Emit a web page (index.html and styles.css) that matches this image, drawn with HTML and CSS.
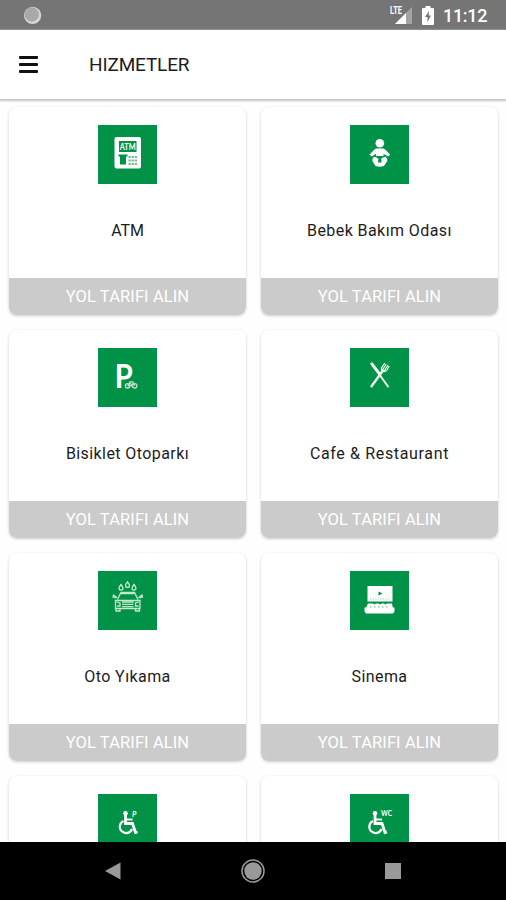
FILE: index.html
```
<!DOCTYPE html>
<html lang="tr">
<head>
    <meta charset="UTF-8">
    <meta name="viewport" content="width=device-width, initial-scale=1.0">
    <title>Hizmetler</title>
    <link rel="stylesheet" href="styles.css">
</head>
<body>
    <!-- Durum çubuğu -->
    <div class="status-bar">
        <svg class="status-dot" width="20" height="20" viewBox="0 0 20 20">
            <circle cx="10.600" cy="10.300" r="8.600" fill="#d6d6d6"/>
            <circle cx="9.800" cy="9.500" r="7.200" fill="#a9a9a9"/>
        </svg>
        <div class="status-icons">
            <svg width="24" height="20" viewBox="0 0 24 20">
                <path d="M22 2v17H5z" fill="#a3a3a3"/>
                <path d="M16 8v11H5z" fill="#fff"/>
                <path d="M0 1h12v9H0z" fill="#757575"/>
                <text x="0" y="9" class="lte" textLength="12" lengthAdjust="spacingAndGlyphs">LTE</text>
            </svg>
            <svg class="battery" width="12" height="19" viewBox="0 0 12 19">
                <path d="M3.500 0h5v2H11q1 0 1 1v15q0 1-1 1H1q-1 0-1-1V3q0-1 1-1h2.500z" fill="#fff"/>
                <path d="M7 5L3 11h2.500v5L9 9.500H6.700z" fill="#757575"/>
            </svg>
            <span class="clock">11:12</span>
        </div>
    </div>

    <!-- Başlık -->
    <header class="header">
        <button class="menu-btn" aria-label="Menü"><span></span><span></span><span></span></button>
        <h1>HIZMETLER</h1>
    </header>

    <!-- Hizmet kartları -->
    <main class="services">
        <div class="card">
            <svg class="card-icon" viewBox="0 0 59 59">
                <rect x="16.500" y="12" width="26.500" height="31.500" rx="2" fill="#fff"/>
                <rect x="21" y="16" width="17.500" height="11" fill="#009347"/>
                <text x="21.700" y="24.800" class="icon-text" font-size="9" textLength="16" lengthAdjust="spacingAndGlyphs">ATM</text>
                <path d="M20.500 29.500h9v2h-1.500v8h-6v-8h-1.500z" fill="#009347"/>
                <path d="M30.500 32h8.500M30.500 35.500h8.500M30.500 39h8.500" stroke="#75bf94" stroke-width="1.800" stroke-dasharray="2.400 .7"/>
            </svg>
            <p class="card-name name-atm">ATM</p>
            <button class="card-btn">YOL TARIFI ALIN</button>
        </div>
        <div class="card">
            <svg class="card-icon" viewBox="0 0 59 59">
                <circle cx="29.800" cy="18.200" r="4.300" fill="#fff"/>
                <path d="M26.500 23.500h6.600q2 .4 3.300 2.200l3.800 4-2.300 1.800-4.400-2.800v2.300h-7.400v-2.300l-4.400 2.800-2.300-1.800 3.800-4q1.300-1.800 3.300-2.200z" fill="#fff"/>
                <path d="M24 31.700q3 .2 4.600 2.300-1 2-.4 3.600h3.200q.6-1.600-.4-3.600 1.600-2.100 4.600-2.300 2.200 2 1.600 4.500l-3.200 4.700q-4.200 1.600-8.400 0l-3.200-4.700q-.6-2.500 1.600-4.500z" fill="#fff"/>
            </svg>
            <p class="card-name">Bebek Bakım Odası</p>
            <button class="card-btn">YOL TARIFI ALIN</button>
        </div>
        <div class="card">
            <svg class="card-icon" viewBox="0 0 59 59">
                <text x="16.800" y="40" class="icon-text" font-size="32.500" textLength="18" lengthAdjust="spacingAndGlyphs">P</text>
                <g fill="none" stroke="#b9dfc8" stroke-width="1.300">
                    <circle cx="29.600" cy="37.800" r="2.200"/>
                    <circle cx="36.700" cy="37.800" r="2.200"/>
                    <path d="M29.600 37.800l2.400-4h3l1.700 4M32 34.500l2 3.300h-4M34 37.800l1.500-3"/>
                </g>
            </svg>
            <p class="card-name">Bisiklet Otoparkı</p>
            <button class="card-btn">YOL TARIFI ALIN</button>
        </div>
        <div class="card">
            <svg class="card-icon" viewBox="0 0 59 59">
                <g fill="none" stroke="#eef8ef" stroke-linecap="round">
                    <path d="M21.500 38.300L33 22.500" stroke-width="2.400"/>
                    <path d="M21.500 15.500l16.500 23" stroke-width="2"/>
                    <path d="M22 16.200l7 9" stroke-width="3"/>
                    <path d="M34.500 15.500l-3 4.500q-.5 2.500 1.500 3.500 2.500.5 4-1.500l2-3.500M36 16.500l-3.300 5M37.800 17.500l-3.300 4.800" stroke-width="1.200"/>
                </g>
            </svg>
            <p class="card-name name-cafe">Cafe &amp; Restaurant</p>
            <button class="card-btn">YOL TARIFI ALIN</button>
        </div>
        <div class="card">
            <svg class="card-icon" viewBox="0 0 59 59">
                <g fill="none" stroke="#c4e8ca" stroke-width="1.300">
                    <path d="M23 13.500q-2 2.700-2 3.600a2 2 0 0 0 4 0q0-.9-2-3.600zM29.500 10.800q-2 2.700-2 3.600a2 2 0 0 0 4 0q0-.9-2-3.600zM36 13.500q-2 2.700-2 3.600a2 2 0 0 0 4 0q0-.9-2-3.600z"/>
                    <path d="M19.500 28.500l3.500-7h13.500l3.500 7M17.500 29.500h24.500v8h-24.500z"/>
                    <path d="M19 26.500l-3.500-2.500-.5 2 3 1M40.500 26.500l3.500-2.500.5 2-3 1M18 38v2h4v-2M37.500 38v2h4v-2"/>
                    <path d="M24 31h11.500M24 33.300h11.500M24 35.600h11.500M23 22.500h13.500M18.500 31l3.500 1v3h-3M41 31l-3.500 1v3h3"/>
                </g>
            </svg>
            <p class="card-name">Oto Yıkama</p>
            <button class="card-btn">YOL TARIFI ALIN</button>
        </div>
        <div class="card">
            <svg class="card-icon" viewBox="0 0 59 59">
                <rect x="17.500" y="15" width="25" height="15.500" fill="#fff"/>
                <path d="M28.500 20.500l4 2-4 2z" fill="#009347"/>
                <path d="M20 28h20" stroke="#a6d6ba" stroke-width="1" stroke-dasharray="1.500 1"/>
                <path d="M18 32.500h5l1.500 1 1.500-1h2.500l1.500 1 1.500-1h2.500l1.500 1 1.500-1h5l.8 4h1.700v4l-1.500 2h-27l-1.500-2v-4h1.700z" fill="#fff"/>
                <path d="M20 35.800h20" stroke="#79c197" stroke-width="1.300" stroke-dasharray="1.500 2.500"/>
            </svg>
            <p class="card-name">Sinema</p>
            <button class="card-btn">YOL TARIFI ALIN</button>
        </div>
        <div class="card">
            <svg class="card-icon" viewBox="0 0 59 59">
                <circle cx="27.500" cy="19.300" r="2.300" fill="#fff"/>
                <g fill="none" stroke="#fff">
                    <path d="M27.500 21v8.500h7l3 9 2-.5" stroke-width="2.800"/>
                    <path d="M28 25.500h6.500" stroke-width="1.800"/>
                    <path d="M25.500 27a6.300 6.300 0 1 0 8.500 8" stroke-width="2.200"/>
                </g>
                <text x="34" y="23" class="icon-text italic" font-size="7.500">P</text>
            </svg>
        </div>
        <div class="card">
            <svg class="card-icon" viewBox="0 0 59 59">
                <circle cx="25" cy="19.300" r="2.300" fill="#fff"/>
                <g fill="none" stroke="#fff">
                    <path d="M25 21v8.500h7l3 9 2-.5" stroke-width="2.800"/>
                    <path d="M25.500 25.500h6.500" stroke-width="1.800"/>
                    <path d="M23 27a6.300 6.300 0 1 0 8.500 8" stroke-width="2.200"/>
                </g>
                <text x="31" y="22" class="icon-text" font-size="7" textLength="11" lengthAdjust="spacingAndGlyphs">WC</text>
            </svg>
        </div>
    </main>

    <!-- Alt gezinme -->
    <nav class="nav-bar">
        <svg width="16" height="18" viewBox="0 0 16 18"><path d="M0 9L15.500 .5v17z" fill="#999"/></svg>
        <svg width="24" height="24" viewBox="0 0 24 24">
            <circle cx="12" cy="12" r="11" fill="none" stroke="#999" stroke-width="1.500"/>
            <circle cx="12" cy="12" r="8.700" fill="#999"/>
        </svg>
        <svg width="16" height="16" viewBox="0 0 16 16"><path d="M0 0h16v16H0z" fill="#999"/></svg>
    </nav>
</body>
</html>
```
FILE: styles.css
```
* {
    box-sizing: border-box;
}

body {
    margin: 0;
    height: 900px;
    display: flex;
    flex-direction: column;
    overflow: hidden;
    background-color: #fefefe;
    color: #1c1c1c;
    font-family: Roboto, "Liberation Sans", sans-serif;
}

button {
    border: none;
    padding: 0;
    font-family: inherit;
    cursor: pointer;
}

/* Durum çubuğu */
.status-bar {
    flex: none;
    height: 30px;
    padding: 0 19px 0 22px;
    display: flex;
    justify-content: space-between;
    align-items: center;
    background-color: #757575;
}

.status-icons {
    display: flex;
    align-items: center;
}

.lte {
    font-size: 10px;
    font-weight: bold;
    fill: #fff;
}

.battery {
    margin: 0 9px 0 8px;
}

.clock {
    width: 44px;
    color: #fff;
    font-size: 18px;
    font-weight: 500;
    line-height: 20px;
    padding-top: 2px;
    letter-spacing: -0.3px;
    white-space: nowrap;
}

/* Başlık */
.header {
    flex: none;
    height: 69px;
    padding-left: 19px;
    display: flex;
    align-items: center;
    background-color: #fff;
    box-shadow: 0 1px 2px 1px #c4c4c4;
    z-index: 1;
}

.menu-btn {
    width: 19px;
    display: flex;
    flex-direction: column;
    gap: 4.500px;
    background: none;
}

.menu-btn span {
    height: 2.500px;
    border-radius: 1px;
    background-color: #111;
}

.header h1 {
    margin: 0 0 0 51px;
    font-size: 19px;
    font-weight: 400;
    letter-spacing: -0.15px;
}

/* Kartlar */
.services {
    flex: 1;
    min-height: 0;
    overflow: hidden;
    padding: 8px 8px 0 9px;
    display: grid;
    grid-template-columns: 1fr 1fr;
    grid-auto-rows: 208px;
    align-content: start;
    gap: 15px;
}

.card {
    display: flex;
    flex-direction: column;
    align-items: center;
    padding-top: 18px;
    overflow: hidden;
    background-color: #fff;
    border-radius: 8px;
    box-shadow: 0 1px 3px rgba(0, 0, 0, 0.2);
}

.card-icon {
    flex: none;
    width: 59px;
    height: 59px;
    background-color: #009347;
}

.icon-text {
    fill: #fff;
    font-family: Lato, sans-serif;
    font-weight: bold;
}

.italic {
    font-style: italic;
}

.card-name {
    margin: 37px 0 0;
    font-size: 16px;
    line-height: 20px;
    letter-spacing: 0.42px;
}

.name-atm {
    letter-spacing: -0.1px;
}

.name-cafe {
    letter-spacing: 0.65px;
}

.card-btn {
    flex: none;
    width: 100%;
    height: 37px;
    margin-top: auto;
    background-color: #cbcbcb;
    color: #fff;
    font-size: 16.500px;
    letter-spacing: 0.1px;
}

/* Alt gezinme */
.nav-bar {
    flex: none;
    height: 58px;
    padding: 0 105px;
    display: flex;
    justify-content: space-between;
    align-items: center;
    background-color: #000;
}
```
